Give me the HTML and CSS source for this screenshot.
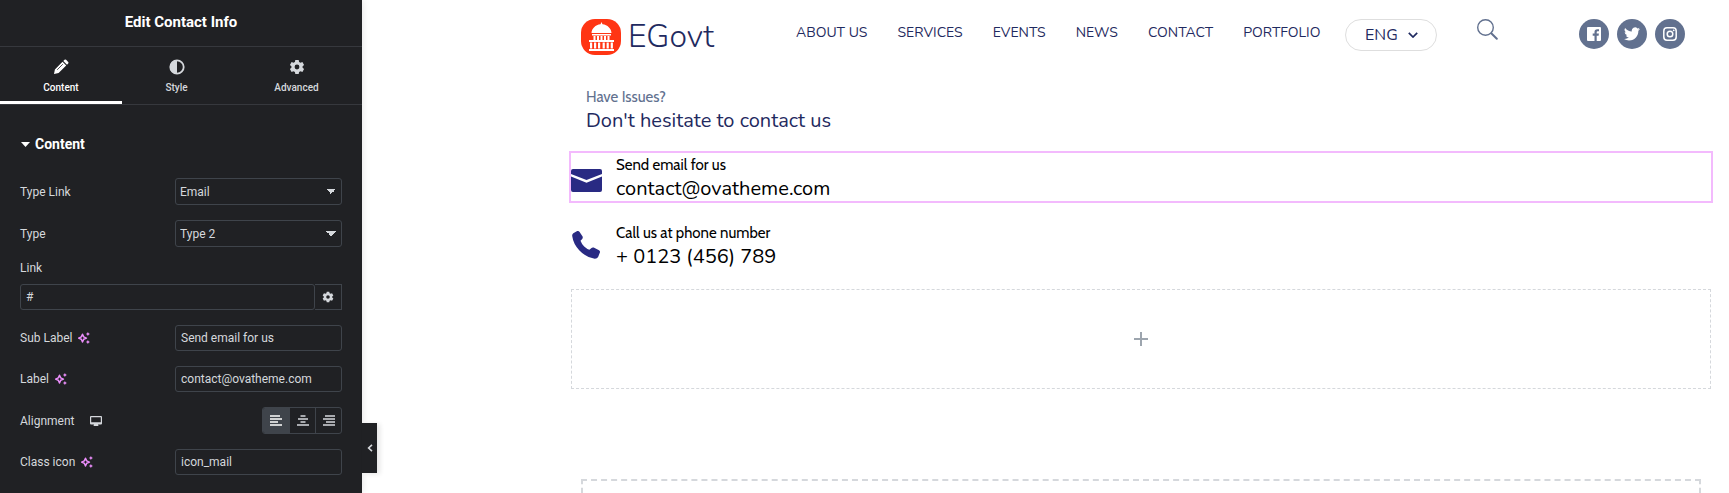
FILE: index.html
```
<!DOCTYPE html>
<html lang="en">
<head>
    <meta charset="utf-8">
    <title>Edit Contact Info</title>
    <link rel="stylesheet" href="styles.css">
</head>
<body>
    <svg class="sprite" aria-hidden="true">
        <symbol id="gear" viewBox="0 0 16 16">
            <path fill="currentColor" fill-rule="evenodd" d="M6.3 1h3.4l.4 2 1.4.8 1.9-.7 1.7 2.9-1.5 1.3v1.4l1.5 1.3-1.7 2.9-1.9-.7-1.4.8-.4 2H6.3l-.4-2-1.4-.8-1.9.7L.9 10l1.500-1.300V7.300L.9 6l1.700-2.900 1.900.7L5.900 3zM8 5.600a2.400 2.400 0 1 0 0 4.800 2.400 2.400 0 0 0 0-4.800z"/>
        </symbol>
        <symbol id="sparkle" viewBox="0 0 12 12">
            <path fill="none" stroke="currentColor" stroke-width="1.500" stroke-linejoin="round" d="M4.500 2.200 5.700 4.900 8.400 6.100 5.700 7.300 4.500 10 3.300 7.300.6 6.100 3.300 4.900z"/>
            <path fill="currentColor" d="m9.900 0 .7 1.300 1.300.7-1.300.7-.7 1.300-.7-1.300L7.900 2l1.300-.7zM9.900 8l.7 1.300 1.300.7-1.300.7-.7 1.300-.7-1.300-1.300-.7 1.300-.7z"/>
        </symbol>
    </svg>

    <aside class="panel">
        <h1 class="panel-title">Edit Contact Info</h1>
        <nav class="tabs">
            <button type="button" class="tab active">
                <svg width="16" height="16" viewBox="0 0 16 16"><path fill="currentColor" d="m1 15 .9-4.600 7.600-7.600 3.700 3.700-7.600 7.600zM10.300 2l1.200-1.200q.8-.7 1.600 0l2.100 2.100q.7.8 0 1.600L14 5.700z"/><path stroke="#202124" stroke-width=".8" d="m4.200 10.800 5.600-5.600"/></svg>
                Content
            </button>
            <button type="button" class="tab">
                <svg width="16" height="16" viewBox="0 0 16 16"><circle cx="8" cy="8" r="6.700" fill="none" stroke="currentColor" stroke-width="1.800"/><path fill="currentColor" d="M8 1a7 7 0 0 0 0 14z"/></svg>
                Style
            </button>
            <button type="button" class="tab">
                <svg width="16" height="16"><use href="#gear"/></svg>
                Advanced
            </button>
        </nav>

        <form class="controls">
            <h2 class="section-title"><svg width="9" height="5" viewBox="0 0 9 5"><path fill="currentColor" d="M0 0h9L4.500 5z"/></svg>Content</h2>

            <div class="control">
                <label for="type-link">Type Link</label>
                <select id="type-link" class="field"><option>Email</option></select>
            </div>
            <div class="control">
                <label for="type">Type</label>
                <select id="type" class="field"><option>Type 2</option></select>
            </div>
            <div class="control stacked">
                <label for="link">Link</label>
                <div class="link-row">
                    <input id="link" class="field" type="text" value="#">
                    <button type="button" class="link-options" aria-label="Link options"><svg width="12" height="12"><use href="#gear"/></svg></button>
                </div>
            </div>
            <div class="control">
                <label for="sub-label">Sub Label <svg class="ai" width="12" height="12"><use href="#sparkle"/></svg></label>
                <input id="sub-label" class="field" type="text" value="Send email for us">
            </div>
            <div class="control">
                <label for="label">Label <svg class="ai" width="12" height="12"><use href="#sparkle"/></svg></label>
                <input id="label" class="field" type="text" value="contact@ovatheme.com">
            </div>
            <div class="control">
                <span class="control-label">Alignment
                    <svg class="device" width="12" height="12" viewBox="0 0 12 12"><path fill="currentColor" fill-rule="evenodd" d="M1 1h10q1 0 1 1v6.500q0 1-1 1H8l.5 1.500h-5L4 9.500H1q-1 0-1-1V2q0-1 1-1zm.2 1.200v5h9.600v-5z"/></svg>
                </span>
                <div class="choices">
                    <button type="button" class="choice active" aria-label="Left"><svg width="12" height="11" viewBox="0 0 12 11"><path stroke="currentColor" stroke-width="1.300" d="M0 1h10M0 4h12M0 7h8M0 10h12"/></svg></button>
                    <button type="button" class="choice" aria-label="Center"><svg width="12" height="11" viewBox="0 0 12 11"><path stroke="currentColor" stroke-width="1.300" d="M3.500 1h5M1 4h10M3.500 7h5M0 10h12"/></svg></button>
                    <button type="button" class="choice" aria-label="Right"><svg width="12" height="11" viewBox="0 0 12 11"><path stroke="currentColor" stroke-width="1.300" d="M2 1h10M0 4h12M3 7h9M0 10h12"/></svg></button>
                </div>
            </div>
            <div class="control">
                <label for="class-icon">Class icon <svg class="ai" width="12" height="12"><use href="#sparkle"/></svg></label>
                <input id="class-icon" class="field" type="text" value="icon_mail">
            </div>
        </form>

        <button type="button" class="collapse" aria-label="Hide panel"><svg width="6" height="8" viewBox="0 0 6 8"><path fill="none" stroke="currentColor" stroke-width="1.600" d="M5 .8 1.600 4 5 7.200"/></svg></button>
    </aside>

    <main class="preview">
        <header class="site-header">
            <a class="brand" href="#">
                <svg width="40" height="36" viewBox="0 0 40 36">
                    <rect width="40" height="36" rx="14" fill="#ff3514"/>
                    <g fill="#fff">
                        <path d="M20.500 3l1 2.200c5 .6 8.800 4.300 9 8.800h-20c.2-4.500 4-8.200 9-8.800z"/>
                        <path d="M11 15h19v1.500H11zM12.500 17h2v4h-2zM16 17h2v4h-2zM19.500 17h2v4h-2zM23 17h2v4h-2zM26.500 17h2v4h-2z"/>
                        <path d="M8 21h25v2H8zM9 23.500h2.200v6H9zM13 23.500h2.200v6H13zM17 23.500h2.200v6H17zM21.600 23.500h2.200v6h-2.200zM25.600 23.500h2.200v6h-2.200zM29.700 23.500h2.200v6h-2.200zM8 30h25v2H8z"/>
                    </g>
                </svg>
                <span>EGovt</span>
            </a>
            <nav class="menu">
                <a href="#">ABOUT US</a>
                <a href="#">SERVICES</a>
                <a href="#">EVENTS</a>
                <a href="#">NEWS</a>
                <a href="#">CONTACT</a>
                <a href="#">PORTFOLIO</a>
            </nav>
            <button type="button" class="language">ENG <svg width="10" height="6" viewBox="0 0 10 6"><path fill="none" stroke="currentColor" stroke-width="1.700" d="m.8.8 4.200 4.200L9.200.8"/></svg></button>
            <button type="button" class="search" aria-label="Search"><svg width="21" height="21" viewBox="0 0 21 21"><circle cx="8.500" cy="8.500" r="7.800" fill="none" stroke="currentColor" stroke-width="1.400"/><path stroke="currentColor" stroke-width="2" stroke-linecap="round" d="m14.500 14.500 5.300 5.300"/></svg></button>
            <div class="social">
                <a href="#" aria-label="Facebook"><svg width="14" height="14" viewBox="0 0 14 14"><path fill="currentColor" d="M1 0h12q1 0 1 1v12q0 1-1 1H9.700V8.700h1.900l.3-2.100H9.700V5.300q0-1 1-1H12v-2h-1.700q-2.800 0-2.800 2.700v1.600H5.700v2.100h1.800V14H1q-1 0-1-1V1q0-1 1-1z"/></svg></a>
                <a href="#" aria-label="Twitter"><svg width="16" height="14" viewBox="0 0 24 20"><path fill="currentColor" d="M24 2.400a10 10 0 0 1-2.800.8A5 5 0 0 0 23.300.5a10 10 0 0 1-3.100 1.200 4.900 4.900 0 0 0-8.400 4.500A14 14 0 0 1 1.700 1a4.900 4.900 0 0 0 1.500 6.600A5 5 0 0 1 1 7v.1a4.900 4.900 0 0 0 3.900 4.800 5 5 0 0 1-2.200.1 4.900 4.900 0 0 0 4.600 3.400A10 10 0 0 1 0 17.500 14 14 0 0 0 7.500 19.700c9.100 0 14-7.500 14-14V5A10 10 0 0 0 24 2.400z"/></svg></a>
                <a href="#" aria-label="Instagram"><svg width="14" height="14" viewBox="0 0 14 14"><rect x=".8" y=".8" width="12.400" height="12.400" rx="3.200" fill="none" stroke="currentColor" stroke-width="1.500"/><circle cx="7" cy="7" r="2.800" fill="none" stroke="currentColor" stroke-width="1.500"/><circle cx="10.700" cy="3.300" r=".9" fill="currentColor"/></svg></a>
            </div>
        </header>

        <section class="intro">
            <p class="sub">Have Issues?</p>
            <p class="main">Don't hesitate to contact us</p>
        </section>

        <section class="contact selected">
            <svg width="31" height="30" viewBox="0 0 31 30"><path fill="currentColor" d="M2 7h27q2 0 2 2v3l-15.500 6L0 12V9q0-2 2-2zM0 14.500l15.500 6.300L31 14.500V28q0 2-2 2H2q-2 0-2-2z"/></svg>
            <div>
                <p class="sub">Send email for us</p>
                <a class="main" href="#">contact@ovatheme.com</a>
            </div>
        </section>

        <section class="contact">
            <svg width="31" height="30" viewBox="0 0 31 30"><path fill="currentColor" d="M2.300 3.200 6.200 1.100q1.500-.5 2.400.8l3 4.700q.5 1.300-.4 2.300L9.500 10.800q1 3 3.700 5.700 2.500 2.400 5.200 3.300l2.100-1.900q1-.8 2.200-.3l5.300 2.700q1.400.9.900 2.300l-1.800 4.300q-1 1.900-3.400 1.800Q14.500 27.300 8.200 20.300 2.300 14 1.200 6.100 1 4.200 2.300 3.200z"/></svg>
            <div>
                <p class="sub">Call us at phone number</p>
                <a class="main" href="#">+ 0123 (456) 789</a>
            </div>
        </section>

        <button type="button" class="add-widget" aria-label="Add widget"><svg width="14" height="14" viewBox="0 0 14 14"><path stroke="currentColor" stroke-width="2" d="M7 0v14M0 7h14"/></svg></button>

        <div class="drop-area"></div>
    </main>
</body>
</html>
```
FILE: styles.css
```
* {
    box-sizing: border-box;
}

body {
    margin: 0;
    display: flex;
    min-height: 100vh;
    background: #fff;
    font-family: Roboto, "Liberation Sans", sans-serif;
}

h1, h2, p {
    margin: 0;
}

a {
    color: inherit;
    text-decoration: none;
}

button {
    padding: 0;
    border: 0;
    background: none;
    color: inherit;
    font: inherit;
    cursor: pointer;
}

svg {
    display: block;
    flex-shrink: 0;
}

.sprite {
    position: absolute;
    width: 0;
    height: 0;
}

/* editor panel */
.panel {
    position: relative;
    flex: 0 0 362px;
    background: #202124;
    color: #d5d8dc;
    font-size: 12px;
    box-shadow: 0 0 8px rgba(0, 0, 0, 0.12);
}

.panel-title {
    padding: 11px 0 13px;
    border-bottom: 1px solid #36383d;
    color: #fff;
    font-size: 15px;
    line-height: 22px;
    font-weight: 700;
    text-align: center;
}

.tabs {
    display: grid;
    grid-template-columns: 122px 109px 1fr;
    height: 58px;
    border-bottom: 1px solid #36383d;
}

.tab {
    display: flex;
    flex-direction: column;
    align-items: center;
    gap: 6px;
    padding-top: 12px;
    border-bottom: 3px solid transparent;
    font-size: 10px;
    line-height: 14px;
    font-weight: 500;
}

.tab.active {
    border-color: #fff;
    color: #fff;
}

.controls {
    display: flex;
    flex-direction: column;
    gap: 15px;
    padding: 30px 20px 18px;
}

.section-title {
    display: flex;
    align-items: center;
    gap: 5px;
    margin-bottom: 10px;
    padding-left: 1px;
    color: #fff;
    font-size: 14px;
    line-height: 18px;
    font-weight: 700;
}

.control {
    display: flex;
    align-items: center;
    justify-content: space-between;
}

.control label,
.control-label {
    display: flex;
    align-items: center;
    gap: 6px;
    line-height: 12px;
}

.stacked {
    flex-direction: column;
    align-items: stretch;
    gap: 10px;
}

.ai {
    color: #eb8efb;
}

.device {
    margin-left: 10px;
}

.field {
    width: 167px;
    height: 26px;
    padding: 0 5px;
    border: 1px solid #3f444b;
    border-radius: 3px;
    background: transparent;
    color: #d5d8dc;
    font: inherit;
}

select.field {
    appearance: none;
    height: 27px;
    padding: 0 4px;
    background: linear-gradient(to bottom right, #d5d8dc 50%, transparent 50%) no-repeat right 5px center / 5px 5px,
        linear-gradient(to bottom left, #d5d8dc 50%, transparent 50%) no-repeat right 10px center / 5px 5px;
}

.link-row {
    display: flex;
}

.link-row .field {
    flex: 1;
}

.link-options {
    display: grid;
    place-items: center;
    width: 27px;
    border: 1px solid #3f444b;
    border-left: 0;
}

.choices {
    display: flex;
    height: 27px;
    border: 1px solid #3f444b;
    border-radius: 3px;
    overflow: hidden;
}

.choice {
    display: grid;
    place-items: center;
    width: 26px;
}

.choice + .choice {
    border-left: 1px solid #3f444b;
}

.choice.active {
    background: #3f444b;
    color: #fff;
}

.collapse {
    position: absolute;
    left: 100%;
    top: 423px;
    display: grid;
    place-items: center;
    width: 15px;
    height: 50px;
    background: #202124;
    box-shadow: 3px 1px 5px rgba(0, 0, 0, 0.1);
}

/* page preview */
.preview {
    flex: 1;
    display: flex;
    flex-direction: column;
    padding: 19px 18px 0 209px;
    font-family: Nunito, Lato, sans-serif;
    color: #000;
}

.site-header {
    display: grid;
    grid-template-columns: 215px auto 92px 1fr 106px;
    align-items: start;
    padding: 0 26px 0 10px;
    color: #1f2a60;
}

.brand {
    display: flex;
    align-items: center;
    gap: 7px;
    height: 36px;
    font-size: 32px;
    line-height: 34px;
    font-weight: 300;
}

.menu {
    display: flex;
    gap: 30px;
    margin-right: 25px;
    font-size: 14px;
    line-height: 28px;
}

.language {
    display: flex;
    align-items: center;
    justify-content: center;
    gap: 10px;
    height: 32px;
    border: 1px solid #dedede;
    border-radius: 16px;
    font-size: 16px;
}

.search {
    justify-self: start;
    margin-left: 40px;
    color: #62718f;
}

.social {
    display: flex;
    gap: 8px;
}

.social a {
    display: grid;
    place-items: center;
    width: 30px;
    height: 30px;
    border-radius: 50%;
    background: #62718f;
    color: #fff;
}

.sub {
    font-family: Cabin, Lato, sans-serif;
    font-size: 15px;
    line-height: 24px;
}

.main {
    display: block;
    font-size: 20px;
    line-height: 24px;
}

.intro {
    padding: 30px 15px 20px;
    color: #1f2a60;
}

.intro .sub {
    color: #62718f;
}

.contact {
    display: flex;
    align-items: center;
    gap: 14px;
    margin-bottom: 20px;
}

.contact svg {
    color: #292a83;
}

.selected {
    outline: 2px solid #f3bafd;
}

.add-widget {
    display: grid;
    place-items: center;
    height: 100px;
    border: 1px dashed #d5d8dc;
    color: #9da5ae;
}

.drop-area {
    flex: 1;
    margin: 90px 10px 0;
    border: 2px dashed #d5d8dc;
    border-bottom: 0;
}
```
